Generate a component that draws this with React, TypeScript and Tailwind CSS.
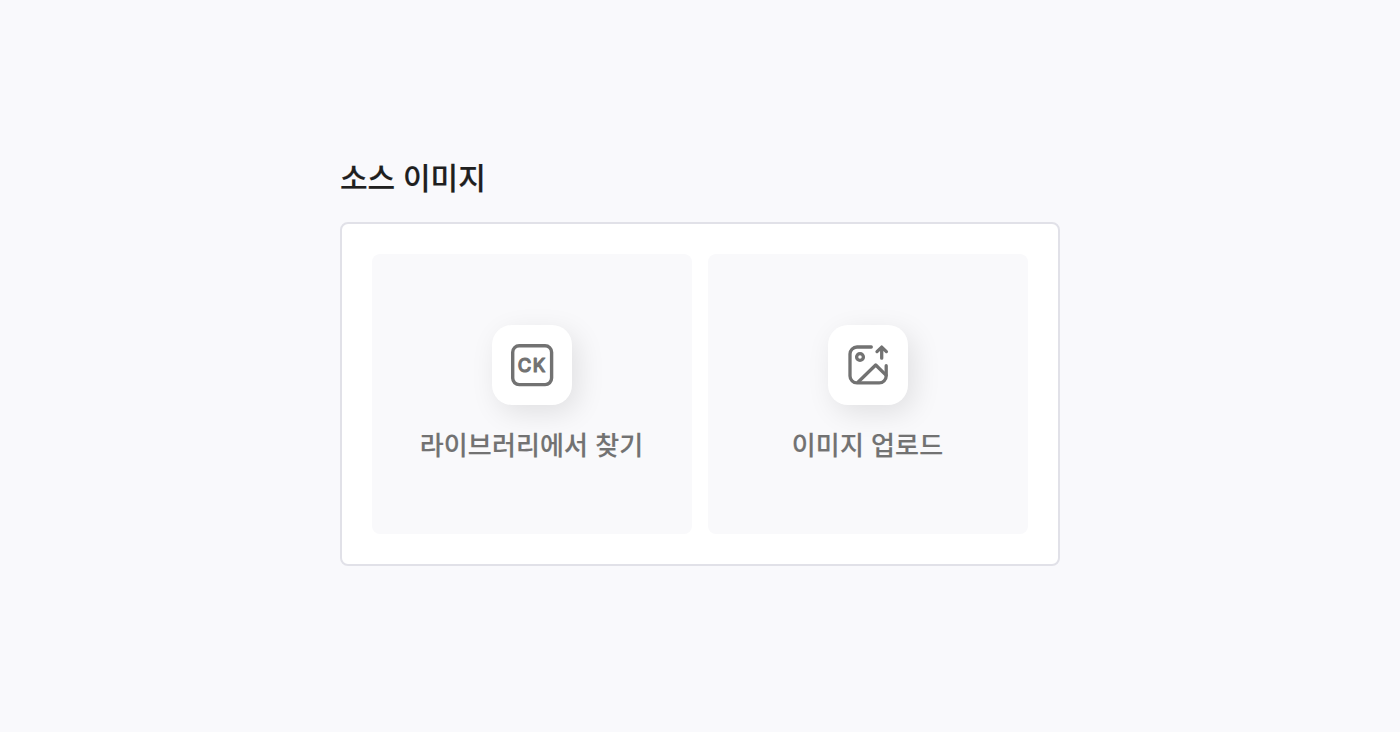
import type { ReactNode } from 'react'

function LibraryIcon() {
  return (
    <svg className="w-12 h-12 text-[#727272]" viewBox="0 0 48 48" fill="none">
      <rect x="4.7" y="4.7" width="38.9" height="38.9" rx="6.5" stroke="currentColor" strokeWidth={3.4} />
      <text
        x="23.6"
        y="30.7"
        textAnchor="middle"
        textLength="27.6"
        lengthAdjust="spacing"
        className="font-['Inter',sans-serif] text-[18.5px] font-medium"
        fill="currentColor"
        stroke="currentColor"
        strokeWidth={1.1}
        strokeLinejoin="round"
      >
        CK
      </text>
    </svg>
  )
}

function UploadIcon() {
  return (
    <svg
      className="w-12 h-12 text-[#727272]"
      viewBox="0 0 48 48"
      fill="none"
      stroke="currentColor"
      strokeWidth={3.3}
      strokeLinecap="round"
      strokeLinejoin="round"
    >
      <path d="M27.3 6H13a7 7 0 0 0-7 7V34.9a7 7 0 0 0 7 7h22.2a7 7 0 0 0 7-7V24.7" />
      <circle cx="16" cy="16" r="3.4" />
      <path d="M14.2 41L31.7 24L42 34.1" />
      <path d="M37.7 17.2V6.3M33 10.6l4.7-4.5L42.4 10.6" />
    </svg>
  )
}

function SourceOption({ icon, label }: { icon: ReactNode; label: string }) {
  return (
    <button
      type="button"
      className="flex flex-1 flex-col items-center justify-center gap-5 rounded-lg bg-[#f9f9fb]"
    >
      <span className="flex w-20 h-20 items-center justify-center rounded-[20px] bg-white shadow-[6px_8px_28px_rgba(0,0,0,0.1)]">
        {icon}
      </span>
      <span className="pr-px text-[26px] leading-[38px] font-medium tracking-[0.15px] [word-spacing:1px] text-[#727272] [-webkit-text-stroke:0.15px_#727272]">
        {label}
      </span>
    </button>
  )
}

export default function App() {
  return (
    <div className="flex h-screen flex-col items-center bg-[#f9f9fc] pt-[154px] font-['Noto_Sans_CJK_KR',sans-serif]">
      <section className="w-[720px]">
        <h2 className="mb-6 text-[30px] leading-11 font-medium [word-spacing:1px] text-[#1f1f1f] [-webkit-text-stroke:0.15px_#1f1f1f]">
          소스 이미지
        </h2>
        <div className="flex h-[344px] gap-4 rounded-lg border-2 border-[#e1e1e8] bg-white p-[30px]">
          <SourceOption icon={<LibraryIcon />} label="라이브러리에서 찾기" />
          <SourceOption icon={<UploadIcon />} label="이미지 업로드" />
        </div>
      </section>
    </div>
  )
}
